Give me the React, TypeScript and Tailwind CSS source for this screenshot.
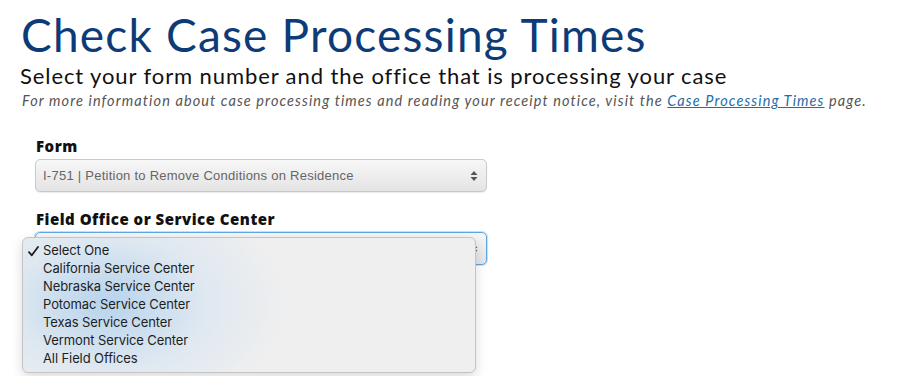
import React from "react";

function Arrows({ className = "" }: { className?: string }) {
  return (
    <svg width="8" height="12" viewBox="0 0 8 12" className={className}>
      <path d="M4 1 L7.5 5 L0.5 5 Z" fill="#555" />
      <path d="M4 11 L7.5 7 L0.5 7 Z" fill="#555" />
    </svg>
  );
}

function Check() {
  return (
    <svg width="11" height="11" viewBox="0 0 11 11">
      <path d="M1 6.2 L3.8 9.3 L10 1" fill="none" stroke="#1e1e1e" strokeWidth="1.8" strokeLinecap="round" strokeLinejoin="round" />
    </svg>
  );
}

export default function App() {
  const items = [
    "California Service Center",
    "Nebraska Service Center",
    "Potomac Service Center",
    "Texas Service Center",
    "Vermont Service Center",
    "All Field Offices",
  ];
  return (
    <div className="w-[904px] h-[376px] bg-white overflow-hidden relative" style={{ fontFamily: "Lato, 'Open Sans', sans-serif" }}>
      <div className="pl-[20px] pt-[8px]">
        <h1 className="text-[46px] leading-[54px] text-[#0d3b78] font-normal tracking-[1.2px] pl-[1px]" style={{ fontFamily: "Lato, sans-serif" }}>
          Check Case Processing Times
        </h1>
        <div className="text-[22px] leading-[26px] text-[#111] mt-[1px] tracking-[0.9px]">
          Select your form number and the office that is processing your case
        </div>
        <div className="text-[14.5px] leading-[18px] text-[#555] italic mt-[3px] pl-[2px] tracking-[1.1px]">
          For more information about case processing times and reading your receipt notice, visit the{" "}
          <span className="text-[#1f6ea8] underline">Case Processing Times</span> page.
        </div>
      </div>

      <div className="pl-[35px] mt-[27px] flex flex-col">
        <div className="text-[15px] leading-[18px] font-extrabold text-[#111] pl-[1px] tracking-[0.5px]" style={{ fontFamily: "'Open Sans', sans-serif" }}>Form</div>
        <div className="mt-[4px] w-[452px] h-[33px] rounded-[5px] border border-[#c9c9c9] bg-gradient-to-b from-[#f7f7f7] to-[#e4e4e4] flex items-center justify-between pl-[7px] pr-[8px] shadow-[0_1px_1px_rgba(0,0,0,0.08)]">
          <span className="text-[13px] text-[#666] tracking-[0.25px]" style={{ fontFamily: "'Liberation Sans', Arial, sans-serif" }}>
            I-751 | Petition to Remove Conditions on Residence
          </span>
          <Arrows />
        </div>

        <div className="mt-[18px] text-[15px] leading-[18px] font-extrabold text-[#111] pl-[1px] tracking-[0.5px]" style={{ fontFamily: "'Open Sans', sans-serif" }}>Field Office or Service Center</div>
        <div className="relative mt-[4px] w-[452px] h-[33px] rounded-[5px] border border-[#5aa7e8] bg-gradient-to-b from-[#f7f7f7] to-[#e4e4e4] flex items-center justify-end pr-[8px] shadow-[0_0_0_1px_rgba(90,167,232,0.35)]">
          <Arrows />
          <div
            className="absolute left-[-14px] top-[4px] w-[454px] h-[136px] rounded-[6px] border border-[#c4c4c4] shadow-[0_4px_12px_rgba(0,0,0,0.15)] overflow-hidden pt-[4px]"
            style={{
              background:
                "radial-gradient(ellipse 180px 120px at 85px 65px, rgba(180,210,236,0.95), rgba(218,230,241,0.75) 55%, rgba(240,240,240,0) 100%), #efefef",
              fontFamily: "Inter, 'Noto Sans', sans-serif",
            }}
          >
            <div className="flex items-center h-[18px] text-[13px] text-[#1e1e1e] tracking-[-0.1px]">
              <span className="w-[20px] pl-[5px] flex items-center"><Check /></span>
              <span>Select One</span>
            </div>
            {items.map((t) => (
              <div key={t} className="flex items-center h-[18px] text-[13px] text-[#1e1e1e] pl-[20px] tracking-[-0.1px]">
                {t}
              </div>
            ))}
          </div>
        </div>
      </div>
    </div>
  );
}
